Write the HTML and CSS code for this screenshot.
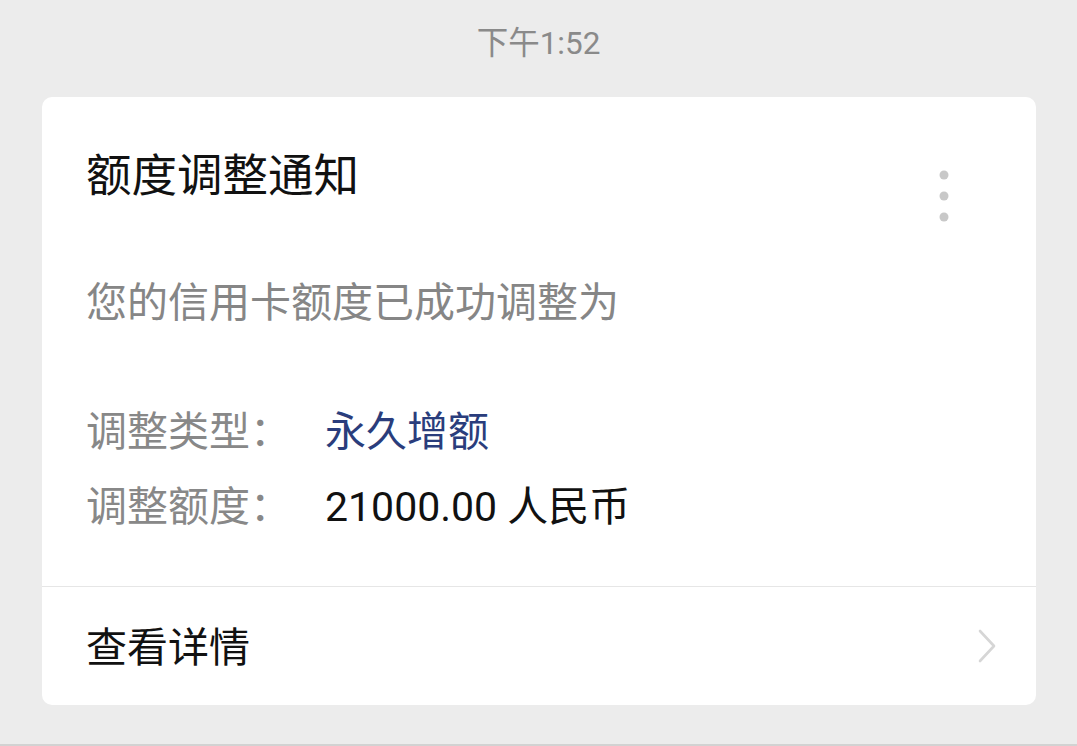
FILE: index.html
```html
<!DOCTYPE html>
<html lang="zh-CN">
<head>
    <meta charset="UTF-8">
    <meta name="viewport" content="width=device-width, initial-scale=1.0">
    <title>额度调整通知</title>
    <link rel="stylesheet" href="styles.css">
</head>
<body>

    <div class="page">
        <div class="time">下午1:52</div>

        <div class="card">
            <div class="card-body">
                <div class="title-row">
                    <h1 class="title">额度调整通知</h1>
                    <svg class="more" width="10" height="52" viewBox="0 0 10 52">
                        <circle cx="5" cy="5" r="4.5" fill="#c8c8c8"/>
                        <circle cx="5" cy="26" r="4.5" fill="#c8c8c8"/>
                        <circle cx="5" cy="47" r="4.5" fill="#c8c8c8"/>
                    </svg>
                </div>

                <p class="intro">您的信用卡额度已成功调整为</p>

                <div class="details">
                    <span class="label">调整类型：</span>
                    <span class="value blue">永久增额</span>
                    <span class="label">调整额度：</span>
                    <span class="value">21000.00 人民币</span>
                </div>
            </div>

            <div class="card-footer">
                <span class="link">查看详情</span>
                <svg class="chevron" width="20" height="36" viewBox="0 0 20 36">
                    <path d="M3 3 L17 18 L3 33" fill="none" stroke="#d6d6d6" stroke-width="2.6" stroke-linecap="round" stroke-linejoin="round"/>
                </svg>
            </div>
        </div>
    </div>

</body>
</html>
```

FILE: styles.css
```css
body {
    font-family: Roboto, "Noto Sans CJK SC", sans-serif;
    background-color: #ececec;
    margin: 0;
    padding: 0;
}

.page {
    height: 746px;
    box-sizing: border-box;
    border-bottom: 2px solid #d2d2d2;
    overflow: hidden;
}

.time {
    padding-top: 29px;
    font-size: 31.5px;
    line-height: 30px;
    color: #8a8a8a;
    text-align: center;
}

.card {
    margin: 38px 41px 0 42px;
    background-color: white;
    border-radius: 10px;
}

.card-body {
    padding: 57px 45px 59px 44px;
    border-bottom: 1px solid #e6e6e6;
}

.title-row {
    display: flex;
    justify-content: space-between;
    align-items: flex-start;
}

.title {
    margin: 0;
    font-size: 45.5px;
    line-height: 46px;
    font-weight: normal;
    color: #111;
}

.more {
    margin-top: 16px;
    margin-right: 42px;
}

.intro {
    margin: 61px 0 0 0;
    font-size: 41px;
    line-height: 40px;
    color: #868686;
}

.details {
    display: grid;
    grid-template-columns: 239px auto;
    row-gap: 35px;
    margin-top: 89px;
    font-size: 41px;
    line-height: 40px;
}

.label {
    color: #888;
}

.value {
    color: #111;
}

.value.blue {
    color: #2a3d7c;
}

.card-footer {
    display: flex;
    justify-content: space-between;
    align-items: center;
    height: 118px;
    padding: 4px 39px 0 44px;
    box-sizing: border-box;
}

.link {
    font-size: 41px;
    line-height: 40px;
    color: #111;
}

.chevron {
    margin-top: -4px;
}
```
